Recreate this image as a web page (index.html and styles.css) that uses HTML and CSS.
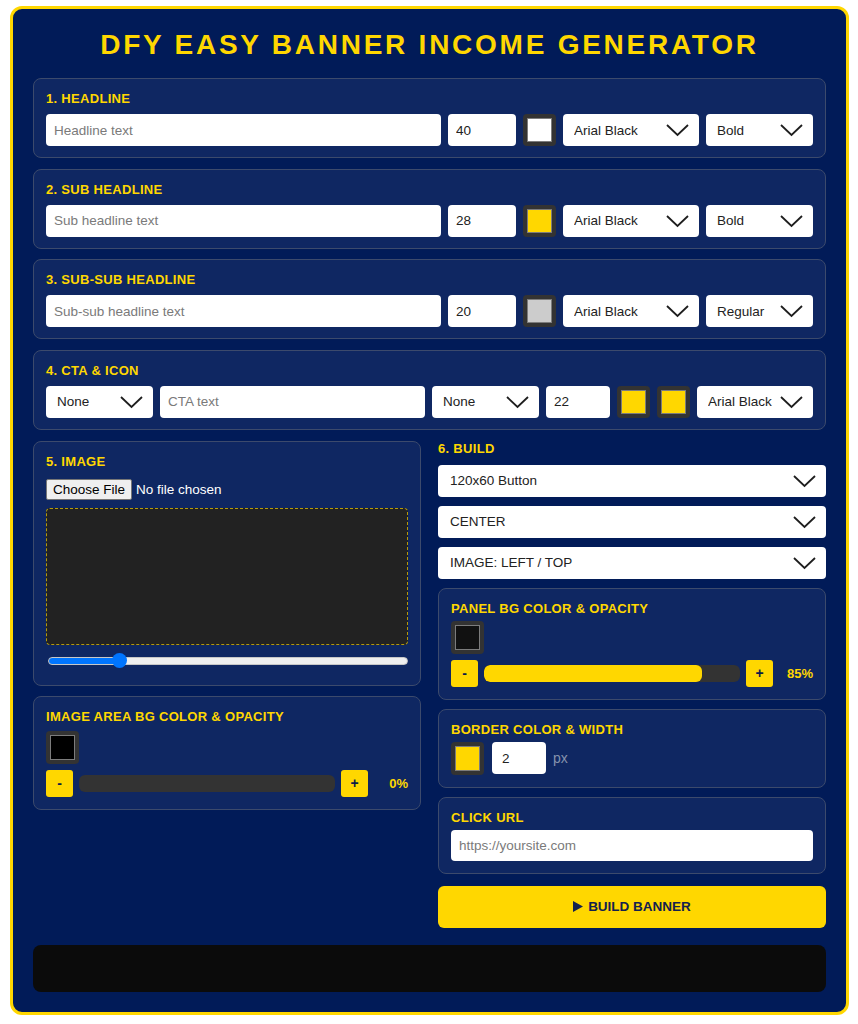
FILE: index.html
```html
<!DOCTYPE html>
<html lang="en">
<head>
<meta charset="utf-8">
<title>DFY Easy Banner Income Generator</title>
<link rel="stylesheet" href="styles.css">
</head>
<body>
<div class="app">
  <h1 class="title">DFY EASY BANNER INCOME GENERATOR</h1>

  <div class="top-panels">
    <section class="panel">
      <div class="label">1. HEADLINE</div>
      <div class="row">
        <input class="field grow" type="text" placeholder="Headline text">
        <input class="field w68" type="text" value="40">
        <span class="swatch"><i class="c-white"></i></span>
        <div class="sel w136"><select><option>Arial Black</option></select><svg class="chev" viewBox="0 0 23 12"><polyline points="1,1 11.5,11 22,1"/></svg></div>
        <div class="sel w107"><select><option>Bold</option></select><svg class="chev" viewBox="0 0 23 12"><polyline points="1,1 11.5,11 22,1"/></svg></div>
      </div>
    </section>

    <section class="panel">
      <div class="label">2. SUB HEADLINE</div>
      <div class="row">
        <input class="field grow" type="text" placeholder="Sub headline text">
        <input class="field w68" type="text" value="28">
        <span class="swatch"><i class="c-yellow"></i></span>
        <div class="sel w136"><select><option>Arial Black</option></select><svg class="chev" viewBox="0 0 23 12"><polyline points="1,1 11.5,11 22,1"/></svg></div>
        <div class="sel w107"><select><option>Bold</option></select><svg class="chev" viewBox="0 0 23 12"><polyline points="1,1 11.5,11 22,1"/></svg></div>
      </div>
    </section>

    <section class="panel">
      <div class="label">3. SUB-SUB HEADLINE</div>
      <div class="row">
        <input class="field grow" type="text" placeholder="Sub-sub headline text">
        <input class="field w68" type="text" value="20">
        <span class="swatch"><i class="c-gray"></i></span>
        <div class="sel w136"><select><option>Arial Black</option></select><svg class="chev" viewBox="0 0 23 12"><polyline points="1,1 11.5,11 22,1"/></svg></div>
        <div class="sel w107"><select><option>Regular</option></select><svg class="chev" viewBox="0 0 23 12"><polyline points="1,1 11.5,11 22,1"/></svg></div>
      </div>
    </section>

    <section class="panel">
      <div class="label">4. CTA &amp; ICON</div>
      <div class="row">
        <div class="sel w107"><select><option>None</option></select><svg class="chev" viewBox="0 0 23 12"><polyline points="1,1 11.5,11 22,1"/></svg></div>
        <input class="field grow" type="text" placeholder="CTA text">
        <div class="sel w107"><select><option>None</option></select><svg class="chev" viewBox="0 0 23 12"><polyline points="1,1 11.5,11 22,1"/></svg></div>
        <input class="field w64" type="text" value="22">
        <span class="swatch"><i class="c-yellow"></i></span>
        <span class="swatch"><i class="c-yellow"></i></span>
        <div class="sel w116"><select><option>Arial Black</option></select><svg class="chev" viewBox="0 0 23 12"><polyline points="1,1 11.5,11 22,1"/></svg></div>
      </div>
    </section>
  </div>

  <div class="cols">
    <div class="col">
      <section class="panel">
        <div class="label lb-10">5. IMAGE</div>
        <input class="file" type="file">
        <div class="dropzone"></div>
        <input class="zoom" type="range" min="0" max="100" value="18.4" step="any">
      </section>

      <section class="panel">
        <div class="label lb-7">IMAGE AREA BG COLOR &amp; OPACITY</div>
        <span class="swatch sw-block"><i class="c-black"></i></span>
        <div class="slider-row">
          <button class="step" type="button">-</button>
          <div class="track"><div class="fill" style="width:0%"></div></div>
          <button class="step" type="button">+</button>
          <span class="val">0%</span>
        </div>
      </section>
    </div>

    <div class="col col-right">
      <div class="label lb-0">6. BUILD</div>
      <div class="sel full"><select><option>120x60 Button</option></select><svg class="chev" viewBox="0 0 23 12"><polyline points="1,1 11.5,11 22,1"/></svg></div>
      <div class="sel full"><select><option>CENTER</option></select><svg class="chev" viewBox="0 0 23 12"><polyline points="1,1 11.5,11 22,1"/></svg></div>
      <div class="sel full"><select><option>IMAGE: LEFT / TOP</option></select><svg class="chev" viewBox="0 0 23 12"><polyline points="1,1 11.5,11 22,1"/></svg></div>

      <section class="panel">
        <div class="label lb-5">PANEL BG COLOR &amp; OPACITY</div>
        <span class="swatch sw-block"><i class="c-dark"></i></span>
        <div class="slider-row">
          <button class="step" type="button">-</button>
          <div class="track"><div class="fill" style="width:85%"></div></div>
          <button class="step" type="button">+</button>
          <span class="val">85%</span>
        </div>
      </section>

      <section class="panel">
        <div class="label lb-5">BORDER COLOR &amp; WIDTH</div>
        <div class="row row-border">
          <span class="swatch"><i class="c-yellow"></i></span>
          <input class="field w54" type="text" value="2">
          <span class="unit">px</span>
        </div>
      </section>

      <section class="panel">
        <div class="label lb-5">CLICK URL</div>
        <input class="field url" type="text" placeholder="https://yoursite.com">
      </section>

      <button class="build" type="button"><svg class="play" viewBox="0 0 10 11"><polygon points="0,0 10,5.5 0,11"/></svg>BUILD BANNER</button>
    </div>
  </div>

  <div class="output"></div>
</div>
</body>
</html>
```

FILE: styles.css
```css
body {
  margin: 0;
  background: #ffffff;
  font-family: "Liberation Sans", Arial, sans-serif;
}

.app {
  margin: 6px 9px 0 10px;
  border: 3px solid #FFD700;
  border-radius: 12px;
  background: #011b58;
  padding: 20px;
}

.title {
  margin: 0 0 17px;
  text-align: center;
  color: #FFD700;
  font-size: 28px;
  line-height: 32px;
  font-weight: 700;
  letter-spacing: 2.75px;
}

.top-panels {
  display: flex;
  flex-direction: column;
  gap: 10.5px;
  margin-bottom: 11px;
}

.panel {
  background: #0f2762;
  border: 1px solid #3c4a6c;
  border-radius: 8px;
  padding: 12px 12px 11px;
}
.cols .panel { padding-bottom: 12px; }

.label {
  color: #FFD700;
  font-size: 13px;
  font-weight: 700;
  line-height: 15px;
  letter-spacing: 0.3px;
  margin-bottom: 8px;
}
.lb-10 { margin-bottom: 10px; }
.lb-7 { margin-bottom: 7px; }
.lb-5 { margin-bottom: 5px; }
.lb-0 { margin-bottom: 0; }

.row {
  display: flex;
  align-items: center;
  gap: 7px;
  height: 32px;
}

.field {
  box-sizing: border-box;
  height: 32px;
  border: none;
  border-radius: 4px;
  background: #ffffff;
  padding: 0 8px;
  font: 13.5px "Liberation Sans", Arial, sans-serif;
  color: #222222;
  outline: none;
}
.field::placeholder { color: #7a7a7a; }

.grow { flex: 1; min-width: 0; }
.w68 { flex: none; width: 68px; }
.w64 { flex: none; width: 64px; }
.w54 { flex: none; width: 54px; padding-left: 10px; }

.sel {
  position: relative;
  flex: none;
  height: 32px;
}
.w136 { width: 136px; }
.w107 { width: 107px; }
.w116 { width: 116px; }
.full { width: 100%; }

.sel select {
  -webkit-appearance: none;
  appearance: none;
  box-sizing: border-box;
  width: 100%;
  height: 32px;
  border: none;
  border-radius: 4px;
  background: #ffffff;
  padding: 0 36px 0 11px;
  font: 13.5px "Liberation Sans", Arial, sans-serif;
  color: #222222;
  outline: none;
}
.full select { padding-left: 12px; }

.chev {
  position: absolute;
  right: 10px;
  top: 10px;
  width: 23px;
  height: 12px;
  pointer-events: none;
  overflow: visible;
}
.chev polyline {
  fill: none;
  stroke: #1e1e1e;
  stroke-width: 1.8;
}

.swatch {
  flex: none;
  box-sizing: border-box;
  width: 33px;
  height: 32px;
  padding: 4px;
  background: #333333;
  border-radius: 4px;
}
.swatch i {
  display: block;
  box-sizing: border-box;
  width: 100%;
  height: 100%;
  border: 1px solid #7c7c7c;
}
.sw-block { display: block; height: 33px; margin-bottom: 6px; }

.c-white { background: #ffffff; }
.c-yellow { background: #FFD700; }
.c-gray { background: #cccccc; }
.c-black { background: #000000; }
.c-dark { background: #111111; }

.cols {
  display: grid;
  grid-template-columns: 1fr 1fr;
  column-gap: 17px;
  align-items: start;
  margin-bottom: 17px;
}
.col {
  display: flex;
  flex-direction: column;
  gap: 10px;
}
.col-right { gap: 9px; }

.file {
  display: block;
  font: 13.5px "Liberation Sans", Arial, sans-serif;
  color: #ffffff;
}
.file::file-selector-button {
  font: inherit;
  color: #000000;
  background: #efefef;
  border: 1px solid #767676;
  border-radius: 2px;
  padding: 2px 6px;
  margin-right: 4px;
}

.dropzone {
  box-sizing: border-box;
  height: 137px;
  margin-top: 8px;
  background: #222222;
  border: 1px dashed #b59a0a;
  border-radius: 4px;
}

.zoom {
  -webkit-appearance: none;
  appearance: none;
  display: block;
  width: calc(100% - 2px);
  height: 16px;
  margin: 8px 0 4px 2px;
  background: transparent;
}
.zoom::-webkit-slider-runnable-track {
  height: 8px;
  border-radius: 4px;
  box-sizing: border-box;
  border: 1px solid #c7c7c7;
  background: linear-gradient(90deg, #0075ff 0 20%, #efefef 20% 100%);
}
.zoom::-webkit-slider-thumb {
  -webkit-appearance: none;
  appearance: none;
  width: 15px;
  height: 15px;
  margin-top: -4.5px;
  border-radius: 50%;
  background: #0075ff;
  border: none;
}

.slider-row {
  display: flex;
  align-items: center;
  gap: 6px;
}
.step {
  flex: none;
  width: 27px;
  height: 27px;
  padding: 0;
  border: none;
  border-radius: 3px;
  background: #FFD700;
  color: #0b1a48;
  font: 700 14px "Liberation Sans", Arial, sans-serif;
}
.track {
  flex: 1;
  height: 17px;
  background: #333333;
  border-radius: 6px;
  overflow: hidden;
}
.fill {
  height: 100%;
  background: #FFD700;
  border-radius: 6px;
}
.val {
  flex: none;
  width: 34px;
  text-align: right;
  color: #FFD700;
  font-weight: 700;
  font-size: 13px;
}

.row-border { gap: 8px; height: 33px; }
.row-border .swatch { height: 33px; }
.unit {
  color: #8592ad;
  font-size: 14px;
  margin-left: -1px;
}

.url {
  display: block;
  width: 100%;
  height: 31px;
}

.build {
  margin-top: 3px;
  height: 42px;
  border: none;
  border-radius: 6px;
  background: #FFD700;
  color: #13214f;
  font: 700 13.5px "Liberation Sans", Arial, sans-serif;
  display: flex;
  align-items: center;
  justify-content: center;
  gap: 5px;
}
.play {
  width: 10px;
  height: 11px;
  fill: #13214f;
}

.output {
  height: 47px;
  background: #0b0b0b;
  border-radius: 8px;
}
```
